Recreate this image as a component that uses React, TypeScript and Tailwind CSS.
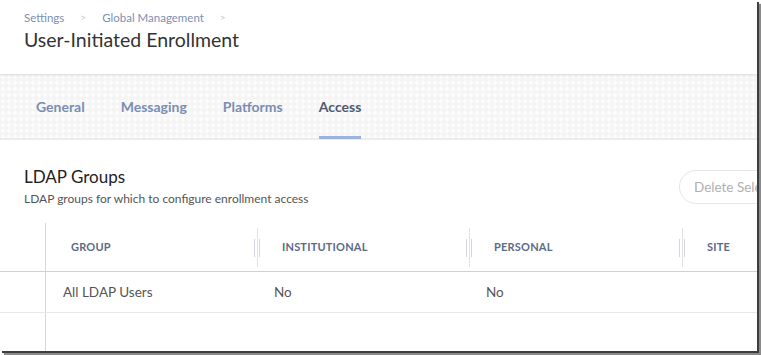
import React from "react";

const font = { fontFamily: "Lato, 'Open Sans', sans-serif" };

function ColHead({ label, first }: { label: string; first?: boolean }) {
    return (
        <div className="relative h-full flex items-center">
            {!first && (
                <>
                    <div className="absolute left-0 top-[5px] bottom-[4px] w-px bg-[#dfe1e6]" />
                    <div className="absolute left-[-3px] top-[16px] h-[18px] w-px bg-[#d3d6dd]" />
                    <div className="absolute left-[2px] top-[16px] h-[18px] w-px bg-[#d3d6dd]" />
                </>
            )}
            <span className="pl-[25px] text-[11px] font-bold tracking-[0.2px] text-[#5b6a87]">{label}</span>
        </div>
    );
}

export default function App() {
    const tabs = ["General", "Messaging", "Platforms", "Access"];
    return (
        <div className="w-[761px] h-[355px] bg-white overflow-hidden" style={font}>
            <div className="w-[757px] h-[351px] bg-white overflow-hidden shadow-[2px_2px_0_#3d3d3d,4px_4px_1px_#8a8a8a] flex flex-col">
                {/* page header */}
                <div className="h-[74px] shrink-0 pl-[24px] pt-[9px] relative z-10 shadow-[0_1px_3px_rgba(0,0,0,0.12)]">
                    <div className="flex items-center text-[11.5px] text-[#7d8fb2] h-[17px]">
                        <span>Settings</span>
                        <span className="mx-[16px] text-[#c2c8d4] text-[10px]">&gt;</span>
                        <span>Global Management</span>
                        <span className="mx-[16px] text-[#c2c8d4] text-[10px]">&gt;</span>
                    </div>
                    <h1 className="text-[19.5px] leading-[30px] text-[#333] -mt-[1px]">User-Initiated Enrollment</h1>
                </div>

                {/* tabs */}
                <div className="h-[66px] shrink-0 bg-[#f5f5f5] bg-[radial-gradient(circle,#fcfcfc_1.6px,transparent_2px)] bg-[length:6px_6px] flex items-stretch pl-[36px] gap-[36px] border-b-2 border-[#ececec]">
                    {tabs.map((t) => (
                        <div key={t} className="relative flex items-center pt-[1px]">
                            <span className={"text-[14px] font-bold " + (t === "Access" ? "text-[#4e5a74]" : "text-[#7a8db3]")}>{t}</span>
                            {t === "Access" && <div className="absolute left-0 right-0 bottom-[-1px] h-[3px] bg-[#9db2dd]" />}
                        </div>
                    ))}
                </div>

                {/* section */}
                <div className="flex-1 relative">
                    <div className="flex pt-[26px]">
                        <div className="pl-[24px] w-[679px] shrink-0">
                            <h2 className="text-[17px] leading-[22px] text-[#222]">LDAP Groups</h2>
                            <p className="text-[12px] text-[#555] mt-[2px]">LDAP groups for which to configure enrollment access</p>
                        </div>
                        <div className="pt-[4px] shrink-0">
                            <button className="h-[34px] px-[14px] rounded-full border border-[#e6e6e6] text-[13.5px] text-[#b0b0b0] whitespace-nowrap">Delete Selected</button>
                        </div>
                    </div>

                    {/* table */}
                    <div className="mt-[15px]">
                        <div className="grid grid-cols-[45px_212px_212px_213px_75px] h-[49px] border-b border-[#ccd0da]">
                            <div />
                            <div className="border-l border-[#d3d6df]"><ColHead label="GROUP" first /></div>
                            <ColHead label="INSTITUTIONAL" />
                            <ColHead label="PERSONAL" />
                            <ColHead label="SITE" />
                        </div>
                        <div className="grid grid-cols-[45px_212px_212px_213px_75px] h-[41px] border-b border-[#e8e8e8] text-[13.5px] text-[#555]">
                            <div />
                            <div className="border-l border-[#d3d6df] flex items-center pl-[17px]">All LDAP Users</div>
                            <div className="flex items-center pl-[17px]">No</div>
                            <div className="flex items-center pl-[17px]">No</div>
                            <div />
                        </div>
                        <div className="grid grid-cols-[45px_1fr] h-[60px]">
                            <div />
                            <div className="border-l border-[#d3d6df]" />
                        </div>
                    </div>
                </div>
            </div>
        </div>
    );
}
